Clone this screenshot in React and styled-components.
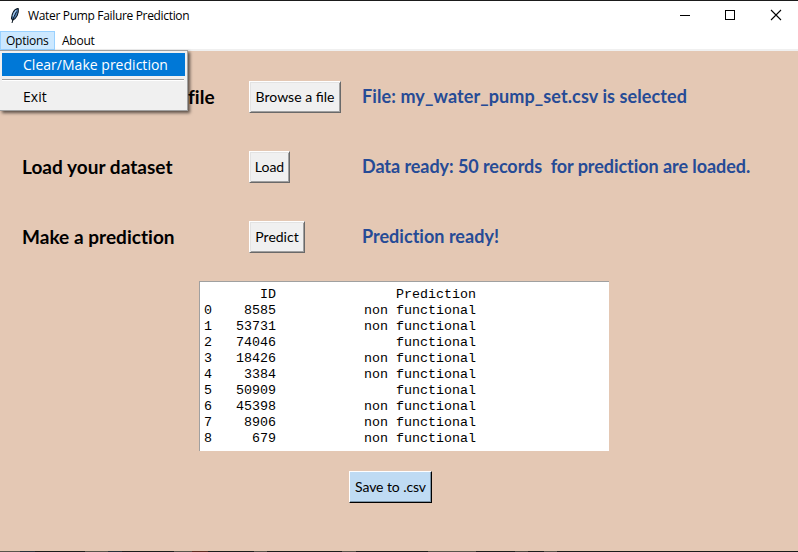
import React from "react";
import styled, { createGlobalStyle } from "styled-components";

const GlobalStyle = createGlobalStyle`
  * { box-sizing: border-box; }
  body { margin: 0; overflow: hidden; font-variant-ligatures: none; }
`;

const Window = styled.div`
  position: relative;
  display: flex;
  flex-direction: column;
  width: 798px;
  height: 552px;
  background: #e4c8b4;
  border-top: 1px solid #1b1b1b;
  font-family: Lato, sans-serif;
  color: #000;
`;

const TitleBar = styled.header`
  display: flex;
  align-items: center;
  height: 30px;
  background: #fff;
  padding-left: 8px;
`;

const Title = styled.h1`
  flex: 1;
  margin: 0 0 0 6px;
  font: 400 12px/16px "Open Sans", sans-serif;
  letter-spacing: -0.33px;
  white-space: nowrap;
`;

const WindowControls = styled.div`
  display: flex;
`;

const ControlIcon = styled.svg`
  width: 46px;
  height: 30px;
  fill: none;
  stroke: #000;
  stroke-width: ${(p) => p.$stroke || 1};
`;

const MenuBar = styled.nav`
  display: flex;
  height: 20px;
  background: #fff;
  border-bottom: 2px solid #f0f0f0;
`;

const MenuTitle = styled.div`
  width: ${(p) => (p.$open ? "55px" : "auto")};
  height: 19px;
  padding: 0 ${(p) => (p.$open ? 5 : 6)}px;
  border: 1px solid ${(p) => (p.$open ? "#99d1ff" : "transparent")};
  background: ${(p) => (p.$open ? "#cce8ff" : "transparent")};
  font: 400 12px/18px "Open Sans", sans-serif;
  letter-spacing: -0.25px;
  white-space: nowrap;
`;

const Menu = styled.div`
  position: absolute;
  z-index: 2;
  left: 0;
  top: 49px;
  width: 188px;
  height: 61px;
  padding: 2px 2px 0;
  background: #f0f0f0;
  border: 1px solid #a0a0a0;
  border-left: 0;
  box-shadow: 2px 2px 3px rgba(0, 0, 0, 0.6);
`;

const MenuItem = styled.div`
  height: 23px;
  padding-left: 21px;
  font: 400 14px/24px "Open Sans", sans-serif;
  letter-spacing: 0.02px;
  white-space: nowrap;
  color: ${(p) => (p.$active ? "#fff" : "#000")};
  background: ${(p) => (p.$active ? "#0078d7" : "transparent")};
`;

const MenuSeparator = styled.div`
  height: 2px;
  margin: 3px 1px 4px 0;
  border-top: 1px solid #a0a0a0;
  border-bottom: 1px solid #fff;
`;

const Content = styled.main`
  flex: 1;
  display: flex;
  flex-direction: column;
  align-items: center;
  padding-top: 30px;
`;

const Steps = styled.section`
  display: grid;
  grid-template-columns: 227px 113px 1fr;
  grid-auto-rows: 32px;
  row-gap: 38px;
  width: 100%;
  padding-left: 22px;
  align-items: stretch;
  justify-items: start;
`;

const StepLabel = styled.div`
  font-size: 19px;
  font-weight: 700;
  line-height: 32px;
  letter-spacing: 0.03px;
  white-space: nowrap;
  padding-left: ${(p) => p.$indent || 0}px;
`;

const Status = styled.div`
  font-size: 18px;
  font-weight: 700;
  line-height: 30px;
  letter-spacing: ${(p) => p.$spacing || 0}px;
  white-space: pre;
  color: #264b96;
`;

const Button = styled.button`
  width: ${(p) => p.$width}px;
  height: 32px;
  padding: 0;
  border: 1px solid;
  border-color: ${(p) =>
    p.$primary ? "#fff #000 #000 #fff" : "#fff #696969 #696969 #fff"};
  box-shadow: ${(p) =>
    p.$primary
      ? "inset -1px -1px #7b95a9"
      : "inset 1px 1px #e3e3e3, inset -1px -1px #a0a0a0"};
  background: ${(p) => (p.$primary ? "#bfdbf3" : "#f0f0f0")};
  color: #000;
  font: 400 14px/28px Lato, sans-serif;
  letter-spacing: ${(p) => (p.$primary ? -0.08 : 0)}px;
  white-space: nowrap;
`;

const Output = styled.pre`
  width: 410px;
  height: 170px;
  margin: 28px 0 20px 10px;
  padding: 5px 4px 0;
  overflow: hidden;
  background: #fff;
  border-top: 1px solid #a0a0a0;
  border-left: 1px solid #a0a0a0;
  font: 400 13.333px/16px "Liberation Mono", monospace;
`;

const SaveRow = styled.div`
  padding-right: 17px;
`;

const DesktopEdge = styled.div`
  height: 1px;
  background: linear-gradient(
    90deg,
    #5a544c 0 20px, #26303a 20px 35px, #1b1b1b 35px 85px,
    #5a544c 85px 108px, #26303a 108px 122px, #1b1b1b 122px 174px,
    #5a544c 174px 192px, #5c2c20 192px 208px, #1b1b1b 208px 254px,
    #5a544c 254px 267px, #1b1b1b 267px 342px, #5a544c 342px 356px,
    #1b1b1b 356px 428px, #5a544c 428px 476px, #1b1b1b 476px 515px,
    #4a4640 515px 528px, #1b1b1b 528px 544px, #5a544c 544px 557px,
    #1b1b1b 557px
  );
`;

const records = [
  ["8585", false],
  ["53731", false],
  ["74046", true],
  ["18426", false],
  ["3384", false],
  ["50909", true],
  ["45398", false],
  ["8906", false],
  ["679", false],
];

const formatLine = (index, id, prediction) =>
  String(index) + id.padStart(9 - String(index).length) + prediction.padStart(25);

const table = [
  formatLine("", "ID", "Prediction"),
  ...records.map(([id, works], i) =>
    formatLine(i, id, works ? "functional" : "non functional")
  ),
].join("\n");

const Feather = () => (
  <svg width="14" height="18" viewBox="0 0 14 18">
    <path d="M9.4 1.6C6.6 2.4 4 6.2 3.5 11.4L4.6 13.2C8.6 11.4 10.9 6.6 10.3 1.8Z" fill="#4f7fb5" stroke="#0c1722" strokeWidth="1.1" />
    <path d="M8.6 4.6C7 7.4 5.3 10.6 4 16" fill="none" stroke="#0c1722" strokeWidth="1" />
    <path d="M8.2 3.4C6.6 5 5.5 7.2 5.1 9.4" fill="none" stroke="#a9cdf0" strokeWidth="1.1" />
  </svg>
);

export default function App() {
  return (
    <Window>
      <GlobalStyle />
      <TitleBar>
        <Feather />
        <Title>Water Pump Failure Prediction</Title>
        <WindowControls>
          <ControlIcon viewBox="0 0 46 30">
            <path d="M20 14.5H30" />
          </ControlIcon>
          <ControlIcon viewBox="0 0 46 30">
            <rect x="19.5" y="9.5" width="9" height="9" />
          </ControlIcon>
          <ControlIcon viewBox="0 0 46 30" $stroke={1.1}>
            <path d="M19 9L29 19M29 9L19 19" />
          </ControlIcon>
        </WindowControls>
      </TitleBar>
      <MenuBar>
        <MenuTitle $open>Options</MenuTitle>
        <MenuTitle>About</MenuTitle>
      </MenuBar>
      <Menu>
        <MenuItem $active>Clear/Make prediction</MenuItem>
        <MenuSeparator />
        <MenuItem>Exit</MenuItem>
      </Menu>
      <Content>
        <Steps>
          <StepLabel $indent={166}>file</StepLabel>
          <Button $width={92}>Browse a file</Button>
          <Status $spacing={0.1}>File: my_water_pump_set.csv is selected</Status>
          <StepLabel>Load your dataset</StepLabel>
          <Button $width={41}>Load</Button>
          <Status $spacing={-0.06}>{"Data ready: 50 records  for prediction are loaded."}</Status>
          <StepLabel>Make a prediction</StepLabel>
          <Button $width={56}>Predict</Button>
          <Status $spacing={0.02}>Prediction ready!</Status>
        </Steps>
        <Output>{table}</Output>
        <SaveRow>
          <Button $width={83} $primary>Save to .csv</Button>
        </SaveRow>
      </Content>
      <DesktopEdge />
    </Window>
  );
}
